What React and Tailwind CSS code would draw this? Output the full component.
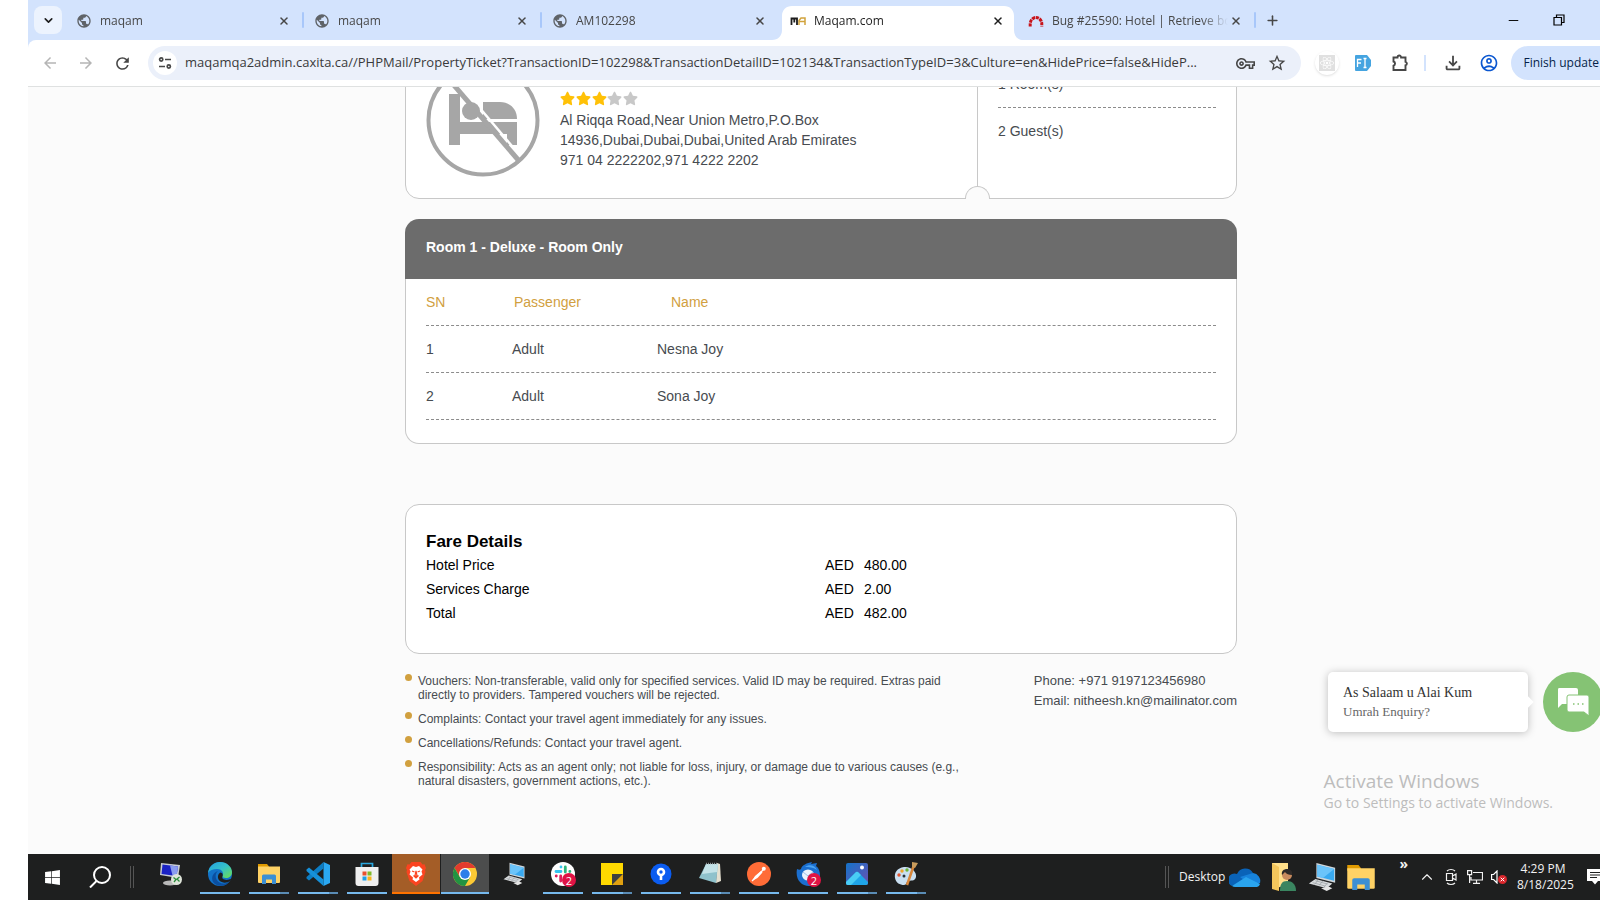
import {
  MdArrowBack,
  MdArrowForward,
  MdOutlineAccountCircle,
  MdOutlineFileDownload,
  MdOutlineVpnKey,
  MdPublic,
  MdRefresh,
  MdStarBorder,
} from "react-icons/md";
import { FaReact, FaStar, FaWindows } from "react-icons/fa";
import { ChevronDown, ChevronUp, Minus, Plus, X } from "lucide-react";

const pageUrl =
  "maqamqa2admin.caxita.ca//PHPMail/PropertyTicket?TransactionID=102298&TransactionDetailID=102134&TransactionTypeID=3&Culture=en&HidePrice=false&HideP...";

const tabs = [
  { id: 1, title: "maqam", icon: <Globe />, divider: true },
  { id: 2, title: "maqam", icon: <Globe />, divider: true },
  { id: 3, title: "AM102298", icon: <Globe /> },
  { id: 4, title: "Maqam.com", icon: <MaqamIcon />, active: true },
  { id: 5, title: "Bug #25590: Hotel | Retrieve bo", icon: <RedmineIcon />, divider: true },
];

const passengers = [
  { sn: 1, type: "Adult", name: "Nesna Joy" },
  { sn: 2, type: "Adult", name: "Sona Joy" },
];

const fares = [
  { label: "Hotel Price", amount: "480.00" },
  { label: "Services Charge", amount: "2.00" },
  { label: "Total", amount: "482.00" },
];

const notes = [
  "Vouchers: Non-transferable, valid only for specified services. Valid ID may be required. Extras paid directly to providers. Tampered vouchers will be rejected.",
  "Complaints: Contact your travel agent immediately for any issues.",
  "Cancellations/Refunds: Contact your travel agent.",
  "Responsibility: Acts as an agent only; not liable for loss, injury, or damage due to various causes (e.g., natural disasters, government actions, etc.).",
];

function Globe() {
  return <MdPublic className="size-4 text-[#5f6368]" />;
}

function MaqamIcon() {
  return (
    <svg viewBox="0 0 16 16" className="size-4" fill="none">
      <path d="M1.500 12V5.500h5.500V12M4.300 5.500v4" stroke="#1c1c1c" strokeWidth="1.800" />
      <path d="M9 12V7.500L11 5h4v3.500H9.500M9.500 8.500H15V12" stroke="#d1a33c" strokeWidth="1.500" />
    </svg>
  );
}

function RedmineIcon() {
  return (
    <svg viewBox="0 0 16 16" className="size-4" fill="none">
      <path d="M2.200 13.500v-2.500a5.800 6.500 0 0 1 11.600 0v2.500" stroke="#c8141b" strokeWidth="3" strokeDasharray="3.200 .7" />
    </svg>
  );
}

function Tab({ tab }) {
  return (
    <div
      className={`relative flex w-[238px] items-center pt-px pr-3 pl-2.5 ${
        tab.active ? "text-[#1f1f1f]" : "text-[#474747]"
      }`}
    >
      {tab.active && (
        <svg viewBox="0 0 250 34" className="absolute bottom-0 -left-2 h-[34px] w-[250px]">
          <path d="M0 34c6 0 10-4 10-10V10C10 4 14 0 20 0h212c6 0 10 4 10 10v14c0 6 4 10 8 10Z" fill="#fff" />
        </svg>
      )}
      <button className="relative flex min-w-0 flex-1 items-center gap-2 text-left text-xs">
        <span className="shrink-0">{tab.icon}</span>
        <span className="min-w-0 flex-1 overflow-hidden whitespace-nowrap [mask-image:linear-gradient(90deg,#000_85%,transparent)]">
          {tab.title}
        </span>
      </button>
      <button aria-label="Close tab" className="relative flex size-4 shrink-0 items-center justify-center">
        <X size={12} strokeWidth={3} />
      </button>
      {tab.divider && <span className="absolute top-3 right-0 h-4 w-0.5 rounded bg-[#a8c7fa]" />}
    </div>
  );
}

function TabStrip() {
  return (
    <div className="flex h-10 shrink-0 items-stretch bg-[#d3e3fd] pl-1.5">
      <button
        aria-label="Search tabs"
        className="mt-1.5 mr-1 flex size-7 shrink-0 items-center justify-center rounded-lg bg-[#ecf3fe] text-[#1f1f1f]"
      >
        <ChevronDown size={13} strokeWidth={3} />
      </button>
      {tabs.map((tab) => (
        <Tab key={tab.id} tab={tab} />
      ))}
      <button aria-label="New tab" className="ml-1.5 flex w-5 items-center justify-center text-[#474747]">
        <Plus size={15} strokeWidth={2.500} />
      </button>
      <div className="ml-auto flex items-center gap-8 pr-[35px] text-black">
        <button aria-label="Minimize">
          <Minus size={15} strokeWidth={1.500} />
        </button>
        <button aria-label="Restore">
          <svg viewBox="0 0 12 12" className="size-3" fill="none" stroke="currentColor" strokeWidth="1.200">
            <path d="M1 3.500h7.500v7.500H1ZM3.500 3.500V1H11v7.500H8.500" />
          </svg>
        </button>
      </div>
    </div>
  );
}

function Toolbar() {
  return (
    <div className="bg-[#d3e3fd]">
      <div className="flex h-[47px] items-center overflow-hidden rounded-tl-lg border-b border-[#dfe1e1] bg-white pl-3 text-[#474747]">
        <button aria-label="Back" className="flex w-5 justify-center text-[#b5b5b5]">
          <MdArrowBack size={18} />
        </button>
        <button aria-label="Forward" className="ml-4 flex w-5 justify-center text-[#b5b5b5]">
          <MdArrowForward size={18} />
        </button>
        <button aria-label="Reload" className="ml-4 flex w-5 justify-center">
          <MdRefresh size={19} />
        </button>
        <div className="ml-4 flex h-[34px] min-w-0 flex-1 items-center rounded-full bg-[#ebf0fa] pr-[14px] pl-[5px]">
          <button aria-label="Site information" className="flex size-6 shrink-0 items-center justify-center rounded-full bg-white">
            <svg viewBox="0 0 14 14" className="size-[14px]" fill="none" stroke="currentColor" strokeWidth="1.700">
              <circle cx="3.200" cy="3.500" r="1.600" />
              <path d="M7 3.500h6M1 10.500h6" />
              <circle cx="10.800" cy="10.500" r="1.600" />
            </svg>
          </button>
          <input
            aria-label="Address"
            readOnly
            value={pageUrl}
            className="ml-2 min-w-0 flex-1 bg-transparent text-[13px] text-[#3a3a3a] outline-none"
          />
          <button aria-label="Passwords" className="ml-2">
            <MdOutlineVpnKey size={19} />
          </button>
          <button aria-label="Bookmark" className="ml-3">
            <MdStarBorder size={20} />
          </button>
        </div>
        <button aria-label="React tools" className="ml-[14px] flex size-6 items-center justify-center rounded-full bg-white shadow">
          <span className="flex size-4 items-center justify-center bg-[#e0e0e0] text-white">
            <FaReact size={14} />
          </span>
        </button>
        <button aria-label="Form filler" className="ml-4">
          <svg viewBox="0 0 16 16" className="size-4">
            <path d="M1 0h11l4 5v6l-4 5H1a1 1 0 0 1-1-1V1a1 1 0 0 1 1-1Z" fill="#45a4e0" />
            <path d="M2.500 12V4.500h4M2.500 8H6M8.500 3.500h3M10 3.500v9M8.500 12.500h3" stroke="#fff" strokeWidth="1.300" fill="none" />
          </svg>
        </button>
        <button aria-label="Extensions" className="ml-[19px]">
          <svg viewBox="0 0 20 20" className="size-5" fill="none" stroke="currentColor" strokeWidth="1.900">
            <path d="M3.500 4.500h4a1.800 2 0 0 1 3.600 0h4.400v4.300a1.800 1.800 0 0 1 0 3.500v4.700H3.500v-4.300a2.200 2.200 0 0 0 0-4.200Z" />
          </svg>
        </button>
        <span className="ml-[14px] h-4 w-0.5 bg-[#d3e3fd]" />
        <button aria-label="Downloads" className="ml-4">
          <MdOutlineFileDownload size={22} />
        </button>
        <button aria-label="Profile" className="ml-[15px] text-[#0b57d0]">
          <MdOutlineAccountCircle size={20} />
        </button>
        <button className="ml-3 flex h-[34px] items-center rounded-l-full bg-[#d3e3fd] pr-px pl-3 text-xs whitespace-nowrap text-[#041e49]">
          Finish update
        </button>
      </div>
    </div>
  );
}

function NoHotelImage() {
  return (
    <svg viewBox="0 0 114 114" className="size-[114px] shrink-0" fill="#a6a6a6">
      <path d="M23 31h11v28h57v23H81V71H34v11H23Z" />
      <path d="M57 39h17c10 0 17 7 17 17H57Z" />
      <path d="m24 10 73 86" stroke="#fff" strokeWidth="2.500" />
      <path d="m20 13 74 86" stroke="#a6a6a6" strokeWidth="5" />
      <circle cx="45" cy="48" r="9" />
      <circle cx="57" cy="57" r="54.500" fill="none" stroke="#a6a6a6" strokeWidth="4" />
    </svg>
  );
}

function HotelCard() {
  return (
    <section className="relative flex shrink-0 rounded-[14px] border border-[#c8c8c8] bg-white text-sm leading-5 text-[#474b50]">
      <div className="flex flex-1 gap-5 px-5 pt-5 pb-[21px]">
        <NoHotelImage />
        <div className="w-80 self-end pb-[7px]">
          <div className="mb-1 flex w-[78px] justify-between" role="img" aria-label="3 out of 5 stars">
            {[1, 2, 3, 4, 5].map((n) => (
              <FaStar key={n} size={15} className={n <= 3 ? "text-[#ffc107]" : "text-[#c8c8c8]"} />
            ))}
          </div>
          <p>Al Riqqa Road,Near Union Metro,P.O.Box 14936,Dubai,Dubai,Dubai,United Arab Emirates</p>
          <p>971 04 2222202,971 4222 2202</p>
        </div>
      </div>
      <div className="w-[259px] border-l border-[#c8c8c8] px-5 pt-[31px]">
        <p className="border-b border-dashed border-[#8c8c8c] pb-[13px]">1 Room(s)</p>
        <p className="pt-[13px]">2 Guest(s)</p>
      </div>
      {/* ticket notch at the foot of the divider */}
      <span className="absolute right-[246px] -bottom-px h-[13px] w-[25px] rounded-t-full border border-b-0 border-[#c8c8c8] bg-[#fbfbfb]" />
    </section>
  );
}

function RoomCard() {
  return (
    <section className="mt-5 shrink-0 text-sm leading-5 text-[#474b50]">
      <h2 className="h-[60px] rounded-t-[14px] bg-[#6c6c6c] px-[21px] pt-[18px] font-bold text-white">
        Room 1 - Deluxe - Room Only
      </h2>
      <div className="rounded-b-[14px] border border-t-0 border-[#c8c8c8] bg-white px-5 pb-[23px]">
        <table className="block text-left">
          <thead className="block">
            <tr className="flex border-b border-dashed border-[#8c8c8c] py-[13px] text-[#d1a03f]">
              <th className="w-[86px] pr-2 font-normal">SN</th>
              <th className="w-[145px] pl-0.5 font-normal">Passenger</th>
              <th className="flex-1 pl-[14px] font-normal">Name</th>
            </tr>
          </thead>
          <tbody className="block">
            {passengers.map((p) => (
              <tr key={p.sn} className="flex border-b border-dashed border-[#8c8c8c] py-[13px]">
                <td className="w-[86px]">{p.sn}</td>
                <td className="w-[145px]">{p.type}</td>
                <td className="flex-1">{p.name}</td>
              </tr>
            ))}
          </tbody>
        </table>
      </div>
    </section>
  );
}

function FareCard() {
  return (
    <section className="mt-[60px] shrink-0 rounded-[14px] border border-[#c8c8c8] bg-white px-5 pt-[26px] pb-7 text-sm leading-6 text-black">
      <h2 className="text-[17px] leading-[22px] font-bold">Fare Details</h2>
      <table className="w-full table-fixed text-left">
        <tbody>
          {fares.map((fare) => (
            <tr key={fare.label}>
              <th className="w-[399px] font-normal">{fare.label}</th>
              <td className="w-[39px]">AED</td>
              <td>{fare.amount}</td>
            </tr>
          ))}
        </tbody>
      </table>
    </section>
  );
}

function Notes() {
  return (
    <footer className="mt-5 flex shrink-0 justify-between text-[#474b50]">
      <ul className="flex w-[560px] flex-col gap-2.5 text-xs leading-[14px]">
        {notes.map((note) => (
          <li key={note} className="flex gap-1.5">
            <span className="size-[7px] shrink-0 rounded-full bg-[#d1a03f]" />
            {note}
          </li>
        ))}
      </ul>
      <address className="-mt-[3px] text-[13px] leading-5 not-italic">
        <p>Phone: +971 9197123456980</p>
        <p>
          Email: <a href="mailto:nitheesh.kn@mailinator.com">nitheesh.kn@mailinator.com</a>
        </p>
      </address>
    </footer>
  );
}

function ChatWidget() {
  return (
    <div className="absolute -right-[3px] bottom-[122px] flex items-center gap-[15px]">
      <div className="relative h-[60px] w-[200px] rounded-[5px] bg-white px-[15px] pt-[11px] font-['Liberation_Serif',serif] shadow-[0_1px_8px_rgba(0,0,0,0.25)]">
        <p className="text-sm leading-5 text-[#333]">As Salaam u Alai Kum</p>
        <p className="text-[13px] leading-[18px] text-[#666]">Umrah Enquiry?</p>
        <span className="absolute top-[26px] -right-1 size-2 rotate-45 bg-white" />
      </div>
      <button aria-label="Open chat" className="flex size-[60px] items-center justify-center rounded-full bg-[#85c374]">
        <svg viewBox="0 0 32 30" className="h-[30px] w-8">
          <path d="M2 1h17a2 2 0 0 1 2 2v14H5l-4 4V2.500A1.500 1.500 0 0 1 2 1Z" fill="#fff" />
          <path d="M12 8h18a2 2 0 0 1 2 2v19l-5-4H12a2 2 0 0 1-2-2V10a2 2 0 0 1 2-2Z" fill="#fff" stroke="#85c374" strokeWidth="1" />
          <path d="M16 17h1.500M20.500 17H22M25 17h1.500" stroke="#85c374" strokeWidth="1.500" />
        </svg>
      </button>
    </div>
  );
}

function LaptopIcon({ className }) {
  return (
    <svg viewBox="0 0 32 32" className={className}>
      <path d="m10 1 20 5v16L10 17Z" fill="#cfd6da" />
      <path d="m11 3 18 4.500v12.500l-18-4.500Z" fill="#39a9f0" />
      <path d="m11 3 18 4.500-12 9.500-6-1.500Z" fill="#6bc4fa" />
      <path d="m9 18 18 5-6 5-19-5Z" fill="#d9dcde" />
      <path d="m9 20 13 3.500M6 22l13 3.500M12 19l-4 5M17 20l-4 5M22 22l-4 5" stroke="#9aa0a4" strokeWidth=".8" />
      <path d="m15 28 8-2 4 2-6 3Z" fill="#e5e5e5" />
    </svg>
  );
}

function FolderIcon({ className }) {
  return (
    <svg viewBox="0 0 24 20" className={className}>
      <path d="M1 0h9l2 2.500v2H1Z" fill="#e09a00" />
      <path d="M1 2.500h22V18a1 1 0 0 1-1 1H2a1 1 0 0 1-1-1Z" fill="#ffd265" />
      <path d="M5 20v-8a1.500 1.500 0 0 1 1.500-1.500h11A1.500 1.500 0 0 1 19 12v8h-4v-4.500H9V20Z" fill="#3c8fd4" />
    </svg>
  );
}

function CountBadge() {
  return (
    <span className="absolute -right-px -bottom-px flex size-[14px] items-center justify-center rounded-full bg-[#e01345] text-[11px] leading-none text-white">
      2
    </span>
  );
}

const remoteIcon = (
  <svg viewBox="0 0 24 24" className="size-6">
    <path d="m2 1 19 2-2 13L1 13Z" fill="#c8ccd4" />
    <path d="m3.500 2.500 15.500 2-1.500 9.500-15-2Z" fill="#1a22c4" />
    <path d="m11 3.500 8 1-1.500 9.500-4-.500Z" fill="#8a9cf0" />
    <ellipse cx="11" cy="21" rx="7" ry="2.500" fill="#b9b9b9" />
    <circle cx="17.500" cy="17.500" r="5.500" fill="#dfe5da" />
    <path d="m14.500 15.500 2.500 2-2 2.500m5.500-5-2.500 2 2.500 2.500" stroke="#2b8a3a" fill="none" strokeWidth="1.300" />
  </svg>
);

const edgeIcon = (
  <svg viewBox="0 0 24 24" className="size-6">
    <defs>
      <linearGradient id="edge-top" x1="0" y1="0" x2="1" y2="1">
        <stop offset="0" stopColor="#239fe0" />
        <stop offset=".5" stopColor="#35c1c9" />
        <stop offset="1" stopColor="#6fe04c" />
      </linearGradient>
    </defs>
    <circle cx="12" cy="12" r="12" fill="#1273c9" />
    <path d="M0 11C1 4 6 0 12 0c7 0 12 5 12 10 0 4-3 6-6 6-2.500 0-4-.8-3.500-1.700C16 12 15 7 9 7 5 7 1.500 8.500 0 11Z" fill="url(#edge-top)" />
    <path d="M10 9c-4 3-3 11 4 12.500 3 .6 6-.500 8-3.500-2 6-10 7.500-15 4C2 18 4 11 10 9Z" fill="#0b4fa0" />
    <path d="M14.500 14.300C13.500 16 15 18 18.500 18c2 0 3.500-.8 5-1.500L22 19c-6 4-13 0-12-5 .3-2 1.500-3 2.500-3.500 2 .3 2.700 2 2 3.800Z" fill="#1f1f1f" />
  </svg>
);

const codeIcon = (
  <svg viewBox="0 0 24 24" className="size-6">
    <path d="M17.500 0 24 3v18l-6.500 3Z" fill="#2aa8f2" />
    <path d="M17.500 0v6.500L3 18.500.5 16.500v-1.500Z" fill="#0c7dc4" />
    <path d="M17.500 24v-6.500L3 5.500.5 7.500V9Z" fill="#1690d9" />
  </svg>
);

const storeIcon = (
  <svg viewBox="0 0 24 24" className="size-6">
    <path d="M6.500 6V1.500h11V6" fill="none" stroke="#29a7df" strokeWidth="1.700" />
    <path d="M.5 5h23v16a3 3 0 0 1-3 3h-17a3 3 0 0 1-3-3Z" fill="#efefef" />
    <path d="M7.500 9.500h4v4h-4Z" fill="#e8502f" />
    <path d="M12.500 9.500h4v4h-4Z" fill="#7fb927" />
    <path d="M7.500 14.500h4v4h-4Z" fill="#1f9fe6" />
    <path d="M12.500 14.500h4v4h-4Z" fill="#f9b51c" />
  </svg>
);

const braveIcon = (
  <svg viewBox="0 0 24 24" className="size-6">
    <path d="M7.500 0h9l2 2.500 2-.300L22 6l-1 2 .5 2-3 9-6.500 5-6.500-5-3-9L3 8 2 6l1.500-3.800 2 .3Z" fill="#fb4420" />
    <path d="m12 5 3-1 3.500 3.500-1 2 1 3-3.500 3 .5 2L12 20l-3.500-2.500.5-2-3.500-3 1-3-1-2L9 4Z" fill="#fff" />
    <path d="m8 9 2.500 1M16 9l-2.500 1M12 9l-1 4.500 1 1 1-1ZM9.500 13.500 12 16l2.500-2.500" stroke="#fb4420" fill="none" strokeWidth="1.200" />
  </svg>
);

const chromeIcon = (
  <svg viewBox="0 0 24 24" className="size-6">
    <circle cx="12" cy="12" r="12" fill="#fcc934" />
    <path d="M1.600 6A12 12 0 0 1 22.400 6H12L7 15Z" fill="#e33b2e" />
    <path d="M1.600 6A12 12 0 0 0 12 24l5.200-9H6.800Z" fill="#229342" />
    <circle cx="12" cy="12" r="6" fill="#fff" />
    <circle cx="12" cy="12" r="4.700" fill="#2b7de9" />
  </svg>
);

const slackIcon = (
  <span className="relative">
    <svg viewBox="0 0 24 24" className="size-6" strokeWidth="2.800" strokeLinecap="round">
      <circle cx="12" cy="12" r="12" fill="#fff" />
      <path d="M5 9.500h5M10 5v.1" stroke="#36c5f0" />
      <path d="M14.300 5v5M18.800 9.500h.1" stroke="#2eb67d" />
      <path d="M14 14h5M14 18.600v.1" stroke="#ecb22e" />
      <path d="M9.700 14v5M5.200 14h.1" stroke="#e01e5a" />
    </svg>
    <CountBadge />
  </span>
);

const stickyIcon = (
  <svg viewBox="0 0 22 22" className="size-[22px]">
    <path d="M0 0h22v22H0Z" fill="#ffd900" />
    <path d="M22 11v11H11Z" fill="#e0a010" />
    <path d="M11 22V11h11Z" fill="#3f3f3f" />
  </svg>
);

const sourceTreeIcon = (
  <svg viewBox="0 0 22 22" className="size-[22px]">
    <circle cx="11" cy="11" r="10.500" fill="#0b5cf0" />
    <circle cx="11" cy="9" r="3" fill="none" stroke="#fff" strokeWidth="2.600" />
    <path d="M11 12.500V17" stroke="#fff" strokeWidth="2.600" />
  </svg>
);

const notepadIcon = (
  <svg viewBox="0 0 24 24" className="size-6">
    <path d="m19 1 3 1 1 17-5 2Z" fill="#e4e0d0" />
    <path d="M8 2h12l-2 19L1 16Z" fill="#8fc2cc" />
    <path d="M8 2h12l-1 8L4 12Z" fill="#c4e3e8" />
    <path d="M8 1.500h12" stroke="#8d9395" strokeWidth="1.500" strokeDasharray="1 1" />
  </svg>
);

const postmanIcon = (
  <svg viewBox="0 0 24 24" className="size-6">
    <circle cx="12" cy="12" r="12" fill="#ff6c37" />
    <path d="m5 19 3-5 6-5 1.500 1.500-5 5.500Z" fill="#fff" />
    <path d="m5 19 11-11" stroke="#fff" strokeWidth="1.200" />
    <circle cx="16.800" cy="6.800" r="2" fill="#fff" />
  </svg>
);

const thunderbirdIcon = (
  <span className="relative">
    <svg viewBox="0 0 24 24" className="size-6">
      <path d="M1 7c2 1 3 1 4 0 1-4 6-6 11-7l-1 2 6-1-1 3c3 2 4 6 4 10 0 6-5 10-11 10C5 24-1 17 1 7Z" fill="#1b6fd0" />
      <path d="M9 5c4-3 10-2 12 3-4-3-8-3-12-3Z" fill="#4aa3f2" />
      <ellipse cx="12" cy="13" rx="6" ry="5.500" fill="#e9f2fd" />
      <path d="m7 10 5 4 5-4" fill="none" stroke="#9cc0ea" />
    </svg>
    <CountBadge />
  </span>
);

const photosIcon = (
  <svg viewBox="0 0 22 22" className="size-[22px]">
    <defs>
      <linearGradient id="photos-bg" x1="0" y1="0" x2="1" y2="1">
        <stop offset="0" stopColor="#1473c9" />
        <stop offset="1" stopColor="#6b4fb0" />
      </linearGradient>
    </defs>
    <rect width="22" height="22" rx="2" fill="url(#photos-bg)" />
    <path d="M0 19 9.500 9.500a2 2 0 0 1 3 0L22 19v1a2 2 0 0 1-2 2H2a2 2 0 0 1-2-2Z" fill="#1fa5e8" />
    <path d="m0 19 9.500-9.500a2 2 0 0 1 3 0L15 12 5 22H2a2 2 0 0 1-2-2Z" fill="#49cdf5" />
    <circle cx="16" cy="4.500" r="2" fill="#fff" />
  </svg>
);

const paintIcon = (
  <svg viewBox="0 0 24 24" className="size-6">
    <path d="M10 5C3 6 0 11 1 16s5 7 9 7c3 0 2-3 4-4s7 1 8-4S17 4 10 5Z" fill="#c9dff0" />
    <circle cx="5" cy="13" r="1.700" fill="#e3552f" />
    <circle cx="8" cy="9" r="1.700" fill="#f0a52a" />
    <circle cx="13" cy="8" r="1.700" fill="#6bb53a" />
    <circle cx="10" cy="14" r="1.500" fill="#26313a" />
    <path d="m20 3-7 20" stroke="#d8863a" strokeWidth="2.500" />
    <path d="m18 0 6 1-3 5-3-1Z" fill="#c99c5c" />
  </svg>
);

const apps = [
  { name: "Remote Desktop", icon: remoteIcon },
  { name: "Edge", icon: edgeIcon, open: 1 },
  { name: "File Explorer", icon: <FolderIcon className="h-5 w-6" />, open: 2 },
  { name: "Visual Studio Code", icon: codeIcon, open: 2 },
  { name: "Store", icon: storeIcon, open: 1 },
  { name: "Brave", icon: braveIcon, alert: true },
  { name: "Chrome", icon: chromeIcon, focused: true },
  { name: "This PC", icon: <LaptopIcon className="size-6" /> },
  { name: "Slack", icon: slackIcon, open: 1 },
  { name: "Sticky Notes", icon: stickyIcon, open: 2 },
  { name: "Sourcetree", icon: sourceTreeIcon, open: 1 },
  { name: "Notepad", icon: notepadIcon, open: 2 },
  { name: "Postman", icon: postmanIcon, open: 1 },
  { name: "Thunderbird", icon: thunderbirdIcon, open: 1 },
  { name: "Photos", icon: photosIcon, open: 2 },
  { name: "Paint", icon: paintIcon, open: 2 },
];

function AppButton({ app }) {
  let background = "";
  if (app.alert) background = "bg-[#a45d27]";
  if (app.focused) background = "bg-[#4c4d4d]";

  return (
    <button aria-label={app.name} className={`flex h-10 w-12 shrink-0 flex-col items-center ${background}`}>
      <span className="flex flex-1 items-center pt-0.5">{app.icon}</span>
      {app.alert && <span className="h-0.5 w-full bg-[#ff7300]" />}
      {app.focused && <span className="h-0.5 w-full bg-[#76b9ed]" />}
      {app.open === 1 && <span className="h-0.5 w-10 bg-[#76b9ed]" />}
      {app.open === 2 && <span className="h-0.5 w-10 border-r-[9px] border-[#5a8cb5] bg-[#76b9ed]" />}
      {!app.open && !app.alert && !app.focused && <span className="h-0.5" />}
    </button>
  );
}

function Taskbar() {
  return (
    <div className="flex h-[46px] shrink-0 overflow-hidden bg-[#1e1f1f] text-white">
      <button aria-label="Start" className="flex w-12 shrink-0 items-center justify-center">
        <FaWindows size={17} />
      </button>
      <button aria-label="Search" className="flex w-12 shrink-0 items-center justify-center">
        <svg viewBox="0 0 22 22" className="size-[22px]" fill="none" stroke="currentColor" strokeWidth="2">
          <circle cx="13" cy="9" r="8" />
          <path d="m7.500 15-6.500 6.500" />
        </svg>
      </button>
      <span className="ml-1.5 h-[22px] w-1 shrink-0 self-center border-x border-[#555]" />
      <div className="ml-[13px] flex gap-px">
        {apps.map((app) => (
          <AppButton key={app.name} app={app} />
        ))}
      </div>
      <div className="ml-auto flex shrink-0 items-center text-xs text-[#f2f2f2]">
        <span className="h-[22px] w-1 border-x border-[#555]" />
        <span className="ml-2.5">Desktop</span>
        <button aria-label="OneDrive" className="ml-1">
          <svg viewBox="0 0 32 22" className="h-[22px] w-8">
            <path d="M8 8a9 9 0 0 1 16-1l-8 9-13 4A6.500 6.500 0 0 1 8 8Z" fill="#0a63b8" />
            <path d="M24 7a8 8 0 0 1 7 10l-8 3-12-9Z" fill="#1783dc" />
            <path d="M3 20 17 11l14 7a4 4 0 0 1-3 3H7a5 5 0 0 1-4-1Z" fill="#2aa4ee" />
          </svg>
        </button>
        <button aria-label="User folder" className="ml-[11px]">
          <svg viewBox="0 0 24 28" className="h-7 w-6">
            <path d="M0 0h16v22l-16 4Z" fill="#ffdf8a" />
            <path d="m0 0 7 4v24l-7-2Z" fill="#f3c65c" />
            <path d="M8 28c0-7 2-10 7-10s9 3 9 10Z" fill="#3a8560" />
            <circle cx="15" cy="12" r="5" fill="#c98b5e" />
            <path d="M10 12c-1-4 2-6 5-6s6 2 5 6c-3 0-6-1-7-3Z" fill="#2f2a28" />
          </svg>
        </button>
        <button aria-label="This PC" className="ml-[11px]">
          <LaptopIcon className="size-[30px]" />
        </button>
        <button aria-label="Libraries" className="ml-[9px]">
          <FolderIcon className="h-[25px] w-[30px]" />
        </button>
        <button aria-label="More toolbars" className="ml-[23px] self-start text-sm leading-5 font-bold">
          »
        </button>
        <button aria-label="Show hidden icons" className="ml-2.5">
          <ChevronUp size={18} strokeWidth={1.500} />
        </button>
        <button aria-label="Meet Now" className="ml-[7px]">
          <svg viewBox="0 0 16 18" className="h-[18px] w-4" fill="none" stroke="currentColor" strokeWidth="1.200">
            <path d="M3.500 5.500h6v7h-6ZM9.500 8l3.500-2v6l-3.500-2M4 3c2-2 6-2 8 0M4 15c2 2 6 2 8 0" />
          </svg>
        </button>
        <button aria-label="Network" className="ml-2">
          <svg viewBox="0 0 16 14" className="h-[14px] w-4" fill="none" stroke="currentColor" strokeWidth="1.200">
            <path d="M6 2.500h9.500v7.500H4V7M9.500 10v3M6 13.300h7M.6.600h4v4h-4ZM2.600 4.600V13" />
          </svg>
        </button>
        <button aria-label="Volume muted" className="ml-2">
          <svg viewBox="0 0 16 14" className="h-[14px] w-4" fill="none">
            <path d="M.6 4.500h2L6 1v12L2.600 9.500h-2Z" stroke="#fff" strokeWidth="1.200" />
            <circle cx="11.500" cy="9.500" r="4.500" fill="#d9262c" />
            <path d="m9.700 7.700 3.600 3.600m0-3.600-3.600 3.600" stroke="#fff" />
          </svg>
        </button>
        <div className="ml-2.5 w-[52px] text-center leading-4 whitespace-nowrap">
          <p>4:29 PM</p>
          <p>8/18/2025</p>
        </div>
        <button aria-label="Notifications" className="ml-[18px] w-[13px] overflow-hidden">
          <svg viewBox="0 0 16 16" className="size-4 max-w-none" fill="#fff">
            <path d="M0 0h16v12H11l-3 3.500L5 12H0Z" />
            <path d="M3 3.500h10M3 6h10M3 8.500h7" stroke="#1e1f1f" />
          </svg>
        </button>
      </div>
    </div>
  );
}

export default function App() {
  return (
    <div className="flex h-screen flex-col overflow-hidden bg-white pl-7 font-['Open_Sans',sans-serif]">
      <TabStrip />
      <Toolbar />
      <main className="relative flex min-h-0 flex-1 flex-col justify-end overflow-hidden bg-[#fbfbfb] pb-[66px] pl-[14px] font-['Liberation_Sans',sans-serif]">
        <div className="mx-auto flex w-full max-w-[832px] flex-col">
          <HotelCard />
          <RoomCard />
          <FareCard />
          <Notes />
        </div>
        <ChatWidget />
        <div className="absolute right-[47px] bottom-[41px] font-['Open_Sans',sans-serif] text-[#bdbdbd]">
          <p className="text-[19px] leading-6">Activate Windows</p>
          <p className="text-sm leading-5">Go to Settings to activate Windows.</p>
        </div>
      </main>
      <Taskbar />
    </div>
  );
}
